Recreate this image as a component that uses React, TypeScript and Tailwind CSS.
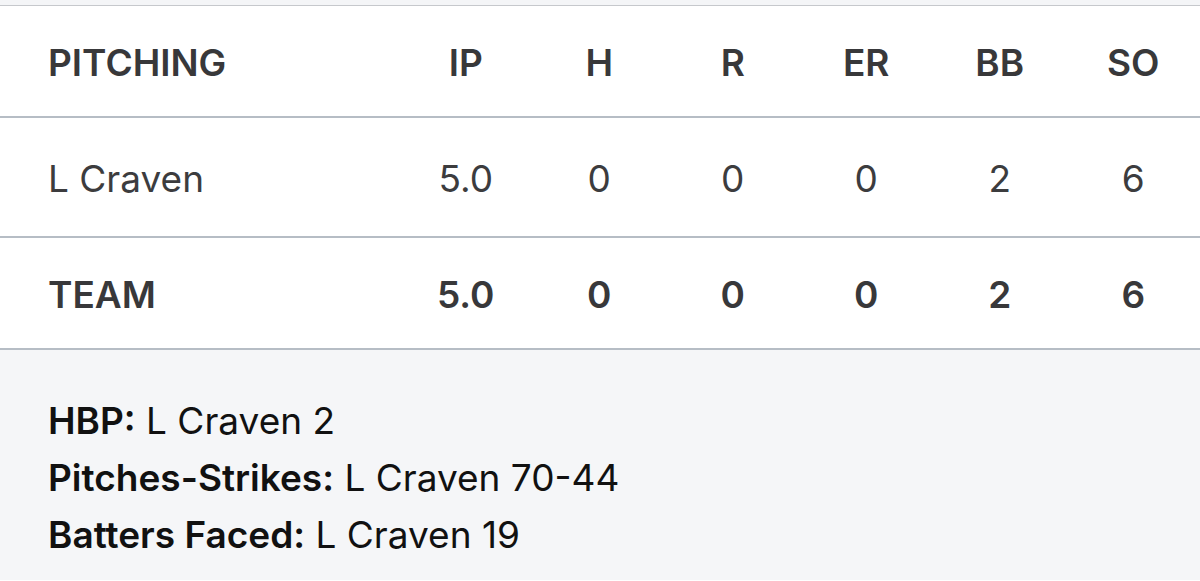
import React from "react";

const cols = ["IP", "H", "R", "ER", "BB", "SO"];
const row = ["5.0", "0", "0", "0", "2", "6"];

function Cells({ values, bold }: { values: string[]; bold?: boolean }) {
  return (
    <>
      {values.map((v, i) => (
        <div
          key={i}
          className={`w-[133.5px] shrink-0 text-center ${bold ? "font-semibold text-[#38383a]" : "text-[#3c3c3e]"}`}
        >
          {v}
        </div>
      ))}
    </>
  );
}

export default function App() {
  return (
    <div
      className="w-[1200px] h-[581px] overflow-hidden bg-white text-[37px] leading-none"
      style={{ fontFamily: 'Inter, "Liberation Sans", Arial, sans-serif' }}
    >
      <div className="h-[5px] bg-[#f4f5f7]" />
      <div className="border-t border-[#c6c8cc]" />
      <div className="h-[112px] flex items-center pl-[48px] pt-[2px] border-b-2 border-[#b6bdc5]">
        <div className="flex-1 font-semibold text-[#38383a]">PITCHING</div>
        <Cells values={cols} bold />
      </div>
      <div className="h-[120px] flex items-center pl-[48px] pt-[2px] border-b-2 border-[#b6bdc5]">
        <div className="flex-1 text-[#3c3c3e]">L Craven</div>
        <Cells values={row} />
      </div>
      <div className="h-[112px] flex items-center pl-[48px] pt-[2px] border-b-2 border-[#b6bdc5]">
        <div className="flex-1 font-semibold text-[#38383a]">TEAM</div>
        <Cells values={row} bold />
      </div>
      <div className="bg-[#f5f6f8] h-[230px] pl-[48px] pt-[42px] leading-[57px] text-[#111111]">
        <div>
          <span className="font-semibold">HBP:</span> L Craven 2
        </div>
        <div>
          <span className="font-semibold">Pitches-Strikes:</span> L Craven 70-44
        </div>
        <div>
          <span className="font-semibold">Batters Faced:</span> L Craven 19
        </div>
      </div>
    </div>
  );
}
